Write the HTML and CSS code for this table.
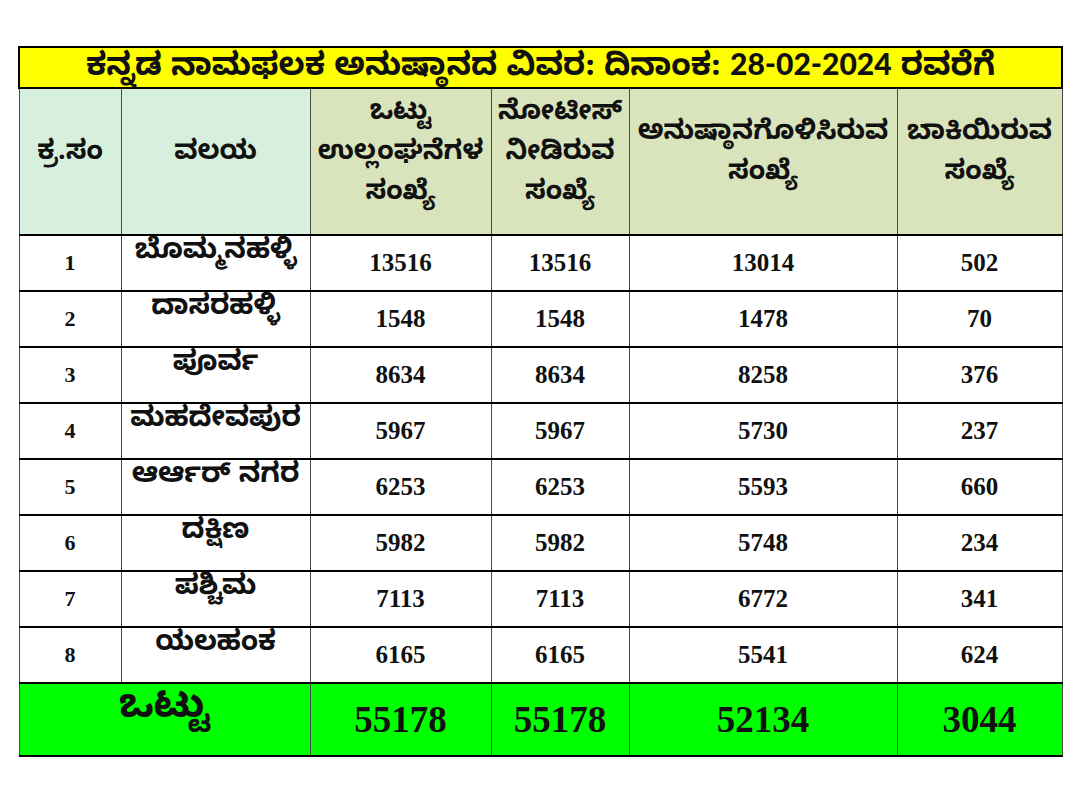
FILE: index.html
```html
<!DOCTYPE html>
<html lang="kn">
<head>
<meta charset="utf-8">
<title>ಕನ್ನಡ ನಾಮಫಲಕ ಅನುಷ್ಠಾನದ ವಿವರ</title>
<link rel="stylesheet" href="styles.css">
</head>
<body>
<div class="page">
<table class="report">
  <colgroup>
    <col class="c1"><col class="c2"><col class="c3"><col class="c4"><col class="c5"><col class="c6">
  </colgroup>
  <thead>
    <tr class="title-row">
      <th colspan="6"><div class="title-text">ಕನ್ನಡ ನಾಮಫಲಕ ಅನುಷ್ಠಾನದ ವಿವರ: ದಿನಾಂಕ: <span class="latin">28-02-2024</span> ರವರೆಗೆ</div></th>
    </tr>
    <tr class="head-row">
      <th class="mint">ಕ್ರ.ಸಂ</th>
      <th class="mint">ವಲಯ</th>
      <th class="olive">ಒಟ್ಟು<br>ಉಲ್ಲಂಘನೆಗಳ<br>ಸಂಖ್ಯೆ</th>
      <th class="olive">ನೋಟೀಸ್<br>ನೀಡಿರುವ<br>ಸಂಖ್ಯೆ</th>
      <th class="olive">ಅನುಷ್ಠಾನಗೊಳಿಸಿರುವ<br>ಸಂಖ್ಯೆ</th>
      <th class="olive">ಬಾಕಿಯಿರುವ<br>ಸಂಖ್ಯೆ</th>
    </tr>
  </thead>
  <tbody>
    <tr><td class="num sn">1</td><td class="zone">ಬೊಮ್ಮನಹಳ್ಳಿ</td><td class="num">13516</td><td class="num">13516</td><td class="num">13014</td><td class="num">502</td></tr>
    <tr><td class="num sn">2</td><td class="zone">ದಾಸರಹಳ್ಳಿ</td><td class="num">1548</td><td class="num">1548</td><td class="num">1478</td><td class="num">70</td></tr>
    <tr><td class="num sn">3</td><td class="zone">ಪೂರ್ವ</td><td class="num">8634</td><td class="num">8634</td><td class="num">8258</td><td class="num">376</td></tr>
    <tr><td class="num sn">4</td><td class="zone">ಮಹದೇವಪುರ</td><td class="num">5967</td><td class="num">5967</td><td class="num">5730</td><td class="num">237</td></tr>
    <tr><td class="num sn">5</td><td class="zone">ಆರ್ಆರ್ ನಗರ</td><td class="num">6253</td><td class="num">6253</td><td class="num">5593</td><td class="num">660</td></tr>
    <tr><td class="num sn">6</td><td class="zone">ದಕ್ಷಿಣ</td><td class="num">5982</td><td class="num">5982</td><td class="num">5748</td><td class="num">234</td></tr>
    <tr><td class="num sn">7</td><td class="zone">ಪಶ್ಚಿಮ</td><td class="num">7113</td><td class="num">7113</td><td class="num">6772</td><td class="num">341</td></tr>
    <tr><td class="num sn">8</td><td class="zone">ಯಲಹಂಕ</td><td class="num">6165</td><td class="num">6165</td><td class="num">5541</td><td class="num">624</td></tr>
  </tbody>
  <tfoot>
    <tr class="total-row">
      <td colspan="2" class="total-label">ಒಟ್ಟು</td>
      <td class="total-num">55178</td>
      <td class="total-num">55178</td>
      <td class="total-num">52134</td>
      <td class="total-num">3044</td>
    </tr>
  </tfoot>
</table>
</div>
</body>
</html>
```

FILE: styles.css
```css
html, body {
  margin: 0;
  padding: 0;
  background: #ffffff;
}

.page {
  padding: 46px 0 0 18px;
}

.report {
  border-collapse: collapse;
  table-layout: fixed;
  width: 1043px;
  font-family: "Noto Sans Kannada", "Noto Sans", "Lato", sans-serif;
  color: #111;
}

.c1 { width: 102px; }
.c2 { width: 189px; }
.c3 { width: 181px; }
.c4 { width: 138px; }
.c5 { width: 268px; }
.c6 { width: 165px; }

.report th,
.report td {
  border-left: 1px solid #4a4a4a;
  border-right: 1px solid #4a4a4a;
  border-top: 2px solid #000;
  border-bottom: 2px solid #000;
  padding: 0;
  text-align: center;
}

.title-row th {
  height: 39px;
  background: #ffff00;
  border: 2px solid #000;
  white-space: nowrap;
}

.title-text {
  height: 39px;
  font-size: 32px;
  font-weight: 700;
  line-height: 39px;
}

.latin {
  font-family: "Lato", "Open Sans", sans-serif;
  font-size: 30px;
  font-weight: 900;
  line-height: 1;
}

.head-row th {
  height: 133px;
  font-size: 27px;
  font-weight: 700;
  line-height: 40px;
  vertical-align: middle;
  padding-bottom: 12px;
}

.mint { background: #d6f0dd; }
.olive { background: #d9e4bd; }

tbody td {
  height: 54px;
}

.num {
  font-family: "Liberation Serif", "DejaVu Serif", serif;
  font-weight: 700;
  font-size: 25px;
  vertical-align: middle;
  padding-top: 4px;
}

.sn {
  font-size: 22px;
}

.zone {
  font-size: 28px;
  font-weight: 700;
  line-height: 36px;
  vertical-align: top;
  padding-top: 3px;
  height: 51px;
}

.total-row td {
  height: 71px;
  background: #00ff00;
}

.total-label {
  font-size: 40px;
  font-weight: 700;
  line-height: 56px;
  vertical-align: top;
  padding-top: 5px;
}

.total-row td.total-label {
  height: 66px;
}

.total-num {
  font-family: "Liberation Serif", "DejaVu Serif", serif;
  font-weight: 700;
  font-size: 37px;
  padding-top: 2px;
}
```
